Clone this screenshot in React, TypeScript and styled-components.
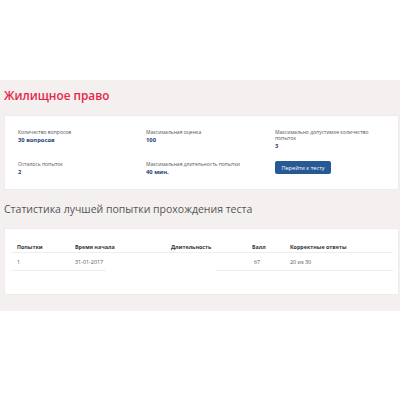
import styled, { createGlobalStyle } from 'styled-components';

const GlobalStyles = createGlobalStyle`
  html, body {
    margin: 0;
    padding: 0;
    background: #ffffff;
    font-family: 'Open Sans', 'Liberation Sans', sans-serif;
  }
`;

const Page = styled.div`
  width: 400px;
  padding-top: 80px;
`;

const Section = styled.section`
  background: #f3f0ef;
  padding: 7px 1px 16px 4px;
`;

const Title = styled.h1`
  margin: 0;
  font-size: 11.8px;
  line-height: 17px;
  font-weight: 600;
  color: #e8254b;
`;

const Card = styled.div<{ $top: number }>`
  margin-top: ${({ $top }) => $top}px;
  background: #ffffff;
  border: 1px solid #efebea;
`;

const InfoGrid = styled.div`
  display: grid;
  grid-template-columns: 128px 129px 102px;
  row-gap: 11px;
  padding: 13px 0 13px 13px;
`;

const InfoItem = styled.div`
  display: flex;
  flex-direction: column;
  align-items: flex-start;
`;

const Label = styled.span`
  font-size: 5px;
  line-height: 6px;
  color: #555555;
`;

const Value = styled.span`
  margin-top: 2px;
  font-size: 5.8px;
  line-height: 7px;
  font-weight: 700;
  color: #213f75;
`;

const Button = styled.button`
  width: 56px;
  height: 13px;
  padding: 0;
  border: none;
  border-radius: 2px;
  background: #275a95;
  color: #ffffff;
  font-family: inherit;
  font-size: 5.6px;
  cursor: pointer;
`;

const SubTitle = styled.h2`
  margin: 12px 0 0;
  font-size: 10.5px;
  line-height: 14px;
  font-weight: 400;
  color: #555555;
`;

const Table = styled.div`
  padding: 13px 5px 23px 6px;
`;

const Row = styled.div<{ $head?: boolean }>`
  display: grid;
  grid-template-columns: 58px 96px 81px 38px 1fr;
  padding: 0 0 0 6px;
  height: ${({ $head }) => ($head ? 10 : 17)}px;
  align-items: center;
  font-size: 5.4px;
  font-weight: ${({ $head }) => ($head ? 700 : 400)};
  color: ${({ $head }) => ($head ? '#333333' : '#555555')};
  border-bottom: ${({ $head }) => ($head ? '1px solid #eeeeee' : 'none')};
`;

const Cell = styled.span<{ $shift?: number }>`
  padding-left: ${({ $shift }) => $shift ?? 0}px;
`;

const Rule = styled.div`
  display: flex;
  height: 1px;
`;

const RuleLine = styled.div<{ $width?: number }>`
  height: 1px;
  background: #eeeeee;
  flex: ${({ $width }) => ($width ? `0 0 ${$width}px` : '1')};
`;

const RuleGap = styled.div`
  flex: 0 0 110px;
`;

const info = [
  { label: 'Количество вопросов', value: '30 вопросов' },
  { label: 'Максимальная оценка', value: '100' },
  { label: 'Максимально допустимое количество попыток', value: '3' },
  { label: 'Осталось попыток', value: '2' },
  { label: 'Максимальная длительность попытки', value: '40 мин.' }
];

export default function App() {
  return (
    <Page>
      <GlobalStyles />
      <Section>
        <Title>Жилищное право</Title>
        <Card $top={11}>
          <InfoGrid>
            {info.map((item) => (
              <InfoItem key={item.label}>
                <Label>{item.label}</Label>
                <Value>{item.value}</Value>
              </InfoItem>
            ))}
            <InfoItem>
              <Button>Перейти к тесту</Button>
            </InfoItem>
          </InfoGrid>
        </Card>
        <SubTitle>Статистика лучшей попытки прохождения теста</SubTitle>
        <Card $top={12}>
          <Table>
            <Row $head>
              <Cell>Попытки</Cell>
              <Cell>Время начала</Cell>
              <Cell>Длительность</Cell>
              <Cell>Балл</Cell>
              <Cell>Корректные ответы</Cell>
            </Row>
            <Row>
              <Cell>1</Cell>
              <Cell>31-01-2017</Cell>
              <Cell />
              <Cell $shift={2}>67</Cell>
              <Cell>20 из 30</Cell>
            </Row>
            <Rule>
              <RuleLine $width={95} />
              <RuleGap />
              <RuleLine />
            </Rule>
          </Table>
        </Card>
      </Section>
    </Page>
  );
}
